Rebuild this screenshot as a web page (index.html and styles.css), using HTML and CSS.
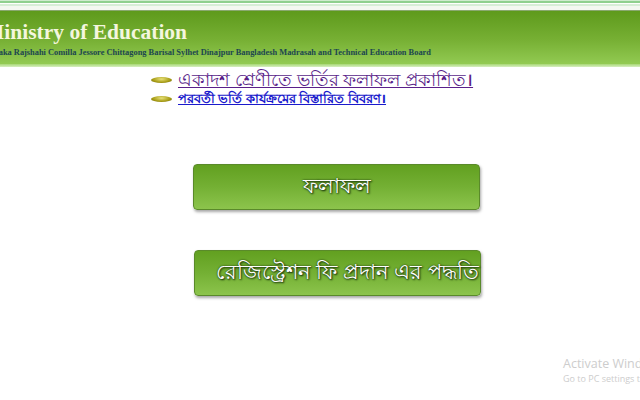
FILE: index.html
```html
<!DOCTYPE html>
<html lang="bn">
<head>
<meta charset="utf-8">
<title>Ministry of Education</title>
<link rel="stylesheet" href="styles.css">
</head>
<body>
<div class="topline">
  <div class="stripe s1"></div>
  <div class="stripe s2"></div>
  <div class="stripe s3"></div>
  <div class="stripe s4"></div>
  <div class="stripe s5"></div>
</div>
<header class="banner">
  <h1 class="title">Ministry of Education</h1>
  <p class="boards">Dhaka Rajshahi Comilla Jessore Chittagong Barisal Sylhet Dinajpur Bangladesh Madrasah and Technical Education Board</p>
</header>
<div class="banner-foot"></div>

<ul class="notices">
  <li class="notice big"><span class="pill"></span><a href="#" class="visited">একাদশ শ্রেণীতে ভর্তির ফলাফল প্রকাশিত।</a></li>
  <li class="notice small"><span class="pill"></span><a href="#">পরবর্তী ভর্তি কার্যক্রমের বিস্তারিত বিবরণ।</a></li>
</ul>

<div class="actions">
  <a href="#" class="btn btn-center">ফলাফল</a>
  <a href="#" class="btn btn-left">রেজিস্ট্রেশন ফি প্রদান এর পদ্ধতি</a>
</div>

<div class="watermark">
  <div class="wm-1">Activate Windows</div>
  <div class="wm-2">Go to PC settings to activate Windows.</div>
</div>
</body>
</html>
```
FILE: styles.css
```css
html, body {
  margin: 0;
  padding: 0;
  background: #ffffff;
  overflow: hidden;
  width: 640px;
  height: 400px;
}

body {
  font-family: "Noto Sans", "Liberation Sans", sans-serif;
  position: relative;
}

.topline .stripe { height: 1px; }
.topline .s1 { background: #cfeccf; }
.topline .s2 { background: #8fd08f; height: 2px; }
.topline .s3 { background: #ffffff; height: 1px; }
.topline .s4 { background: #d8eed8; height: 2px; }
.topline .s5 { background: #f4f8f2; height: 4px; }

.banner {
  height: 53px;
  background: linear-gradient(#5e9a1c, #77b034 55%, #92ca52);
  border-top: 1px solid #8aa870;
  overflow: hidden;
  white-space: nowrap;
}

.title {
  margin: 0 0 0 -16px;
  padding: 10px 0 0 0;
  font-family: "Liberation Serif", "DejaVu Serif", serif;
  font-weight: bold;
  font-size: 21.5px;
  line-height: 22px;
  color: #f4f6de;
}

.boards {
  margin: 5px 0 0 -12px;
  font-family: "Liberation Serif", "DejaVu Serif", serif;
  font-weight: bold;
  font-size: 8.4px;
  line-height: 10px;
  color: #1c4650;
}

.banner-foot {
  height: 3px;
  background: linear-gradient(#a7d773, #d6eec0);
}

.notices {
  list-style: none;
  margin: 2px 0 0 151px;
  padding: 0;
}

.notice {
  display: flex;
  align-items: center;
  gap: 6px;
  white-space: nowrap;
}

.notice.big { height: 21px; }
.notice.small { height: 15px; margin-top: 1px; }

.pill {
  width: 21px;
  height: 6px;
  border-radius: 50%;
  background: radial-gradient(ellipse at 50% 35%, #e9e27a, #a59a12 60%, #5a5205);
  flex: none;
}

.notice a { text-decoration: underline; line-height: 1.1; }
.notice.big a {
  font-size: 18.3px;
  color: #5a1f8a;
  font-weight: 500;
}
.notice.small a {
  font-size: 13.2px;
  color: #1a1acc;
  font-weight: bold;
}

.actions {
  display: flex;
  flex-direction: column;
  margin: 58px 0 0 193px;
  gap: 40px;
}

.btn {
  display: flex;
  align-items: center;
  width: 287px;
  height: 46px;
  box-sizing: border-box;
  border-radius: 4px;
  border: 1px solid #5a8a2a;
  background: linear-gradient(#62a020, #74b034 50%, #8cc44c);
  box-shadow: 1px 2px 3px rgba(0, 0, 0, 0.35);
  color: #ffffff;
  text-decoration: none;
  font-size: 21px;
  font-weight: 500;
  white-space: nowrap;
  text-shadow: 0 0 2px #16300a, 1px 1px 2px #16300a;
}

.btn-center { justify-content: center; }

.btn-left {
  margin-left: 1px;
  padding-left: 21px;
  overflow: visible;
  font-size: 20.8px;
}

.watermark {
  position: absolute;
  left: 563px;
  top: 355px;
  color: #cdcdcd;
  font-family: "Open Sans", "Liberation Sans", sans-serif;
  white-space: nowrap;
}

.wm-1 { font-size: 12.5px; line-height: 17px; }
.wm-2 { font-size: 9px; line-height: 13px; }
```
